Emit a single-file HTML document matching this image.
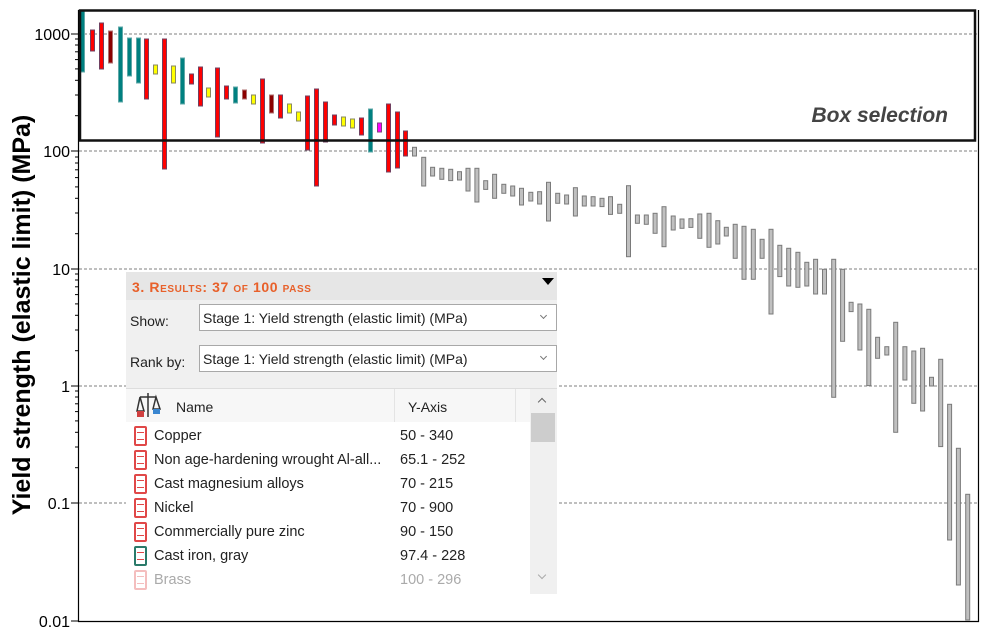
<!DOCTYPE html>
<html><head><meta charset="utf-8"><style>
body{margin:0;width:981px;height:630px;background:#fff;position:relative;overflow:hidden;font-family:"Liberation Sans",sans-serif}
#svg{position:absolute;left:0;top:0}
#svg text{font-family:"Liberation Sans",Arial,sans-serif}
.panel{position:absolute;left:126px;top:272px;width:431px;height:321px;background:#f0f0f0;font-family:"Liberation Sans",sans-serif;font-size:14px;color:#222}
.hdr{position:absolute;left:0;top:0;width:431px;height:28px;background:#e6e6e6}
.title{position:absolute;left:6px;top:8px;color:#e8602a;font-weight:bold;font-family:"Liberation Sans",sans-serif;letter-spacing:.6px;font-variant:small-caps;font-size:14px;line-height:14px}
.tri{position:absolute;right:3px;top:6px;width:0;height:0;border-left:6px solid transparent;border-right:6px solid transparent;border-top:7px solid #000}
.lbl{position:absolute;left:4px}
.dd{position:absolute;left:73px;width:358px;height:27px;border:1px solid #a8a8a8;background:#fff;box-sizing:border-box;padding:5px 0 0 3px;font-size:14px;white-space:nowrap}
.dd:after{content:"";position:absolute;right:10px;top:8px;width:4px;height:4px;border-right:1px solid #777;border-bottom:1px solid #777;transform:rotate(45deg)}
.list{position:absolute;left:0;top:116px;width:431px;height:205px;background:#fff;border-top:1px solid #ddd}
.lh{position:absolute;left:0;top:0;width:404px;height:33px;background:#f7f7f7}
.row{position:absolute;left:28px;font-size:14.5px;white-space:nowrap}
.val{position:absolute;left:274px;font-size:14.5px}
.ic{position:absolute;left:8px;width:9px;height:16px;border:2px solid #e04848;background:#fff;border-radius:2px;box-sizing:content-box}
.ic:after{content:"";position:absolute;left:1px;top:4px;width:7px;height:6px;border-top:1.5px solid currentColor;border-bottom:1.5px solid currentColor;color:#e04848}
.sb{position:absolute;left:404px;top:0;width:27px;height:205px;background:#f0f0f0}
</style></head><body>
<svg id="svg" width="981" height="630" xmlns="http://www.w3.org/2000/svg"></svg>
<div class="panel">
 <div class="hdr"><div class="title">3. Results: 37 of 100 pass</div><div class="tri"></div></div>
 <div class="lbl" style="top:41px">Show:</div>
 <div class="dd" style="top:32px">Stage 1: Yield strength (elastic limit) (MPa)</div>
 <div class="lbl" style="top:82px">Rank by:</div>
 <div class="dd" style="top:73px">Stage 1: Yield strength (elastic limit) (MPa)</div>
 <div class="list">
  <div class="lh">
   <svg style="position:absolute;left:10px;top:2px" width="26" height="28"><path d="M12 2v24M4 6h16M4 6l-3 14h7zM20 6l-3 12h7z" stroke="#333" fill="none" stroke-width="1.5"/><path d="M1 20h7v6H1z" fill="#d04040"/><path d="M17 18h7v5h-7z" fill="#3a86d0"/></svg>
   <div style="position:absolute;left:50px;top:10px">Name</div>
   <div style="position:absolute;left:268px;top:0;width:1px;height:33px;background:#e4e4e4"></div>
   <div style="position:absolute;left:282px;top:10px">Y-Axis</div>
   <div style="position:absolute;left:389px;top:0;width:1px;height:33px;background:#e4e4e4"></div>
  </div>
  <div class="sb"><div style="position:absolute;left:9px;top:10px;width:5px;height:5px;border-left:1.5px solid #666;border-top:1.5px solid #666;transform:rotate(45deg)"></div><div style="position:absolute;left:1px;top:24px;width:24px;height:29px;background:#cdcdcd"></div><div style="position:absolute;left:9px;top:183px;width:5px;height:5px;border-right:1.5px solid #aaa;border-bottom:1.5px solid #aaa;transform:rotate(45deg)"></div></div>
  <div class="ic" style="top:37px"></div><div class="row" style="top:39px">Copper</div><div class="val" style="top:39px">50 - 340</div>
  <div class="ic" style="top:61px"></div><div class="row" style="top:63px">Non age-hardening wrought Al-all...</div><div class="val" style="top:63px">65.1 - 252</div>
  <div class="ic" style="top:85px"></div><div class="row" style="top:87px">Cast magnesium alloys</div><div class="val" style="top:87px">70 - 215</div>
  <div class="ic" style="top:109px"></div><div class="row" style="top:111px">Nickel</div><div class="val" style="top:111px">70 - 900</div>
  <div class="ic" style="top:133px"></div><div class="row" style="top:135px">Commercially pure zinc</div><div class="val" style="top:135px">90 - 150</div>
  <div class="ic" style="top:157px;border-color:#2a7a6a;color:#2a7a6a"></div><div class="row" style="top:159px">Cast iron, gray</div><div class="val" style="top:159px">97.4 - 228</div>
  <div class="ic" style="top:181px;opacity:.35"></div><div class="row" style="top:183px;color:#aaa">Brass</div><div class="val" style="top:183px;color:#aaa">100 - 296</div>
 </div>
</div>
<script>
var s='';
var grid=[34,151,269,386,503,621],labs=['1000','100','10','1','0.1','0.01'];
for(var i=0;i<6;i++){var y=grid[i];
 if(i<5)s+='<line x1="79" y1="'+y+'" x2="978" y2="'+y+'" stroke="#555" stroke-width="0.8" stroke-dasharray="3,2"/>';
 s+='<line x1="71" y1="'+y+'" x2="79" y2="'+y+'" stroke="#000" stroke-width="1"/>';
 s+='<text x="70" y="'+(y+6)+'" text-anchor="end" font-size="16">'+labs[i]+'</text>';
 if(i<5)for(var k=2;k<10;k++){var yy=y-Math.log10(k)*117.4; if(yy>10)s+='<line x1="75" y1="'+yy.toFixed(1)+'" x2="79" y2="'+yy.toFixed(1)+'" stroke="#000"/>';}
}
s+='<line x1="78.5" y1="10" x2="78.5" y2="622" stroke="#000" stroke-width="1.2"/>';
s+='<line x1="78" y1="621.5" x2="979" y2="621.5" stroke="#000" stroke-width="1.2"/>';
s+='<line x1="978.5" y1="10" x2="978.5" y2="622" stroke="#000" stroke-width="1.2"/>';
var C={r:['#ff0000','#704060'],t:['#008080','#60a8a8'],y:['#ffff00','#8a8a60'],d:['#8b0000','#b07070'],m:['#ff00ff','#804080'],g:['#c0c0c0','#7a7a7a']};
var B=[[80,10,72,'t'],[90,30,51,'r'],[99,23,69,'r'],[108,31,63,'d'],[118,27,102,'t'],[127,38,76,'t'],[136,38,83,'t'],[144,39,99,'r'],[153,65,74,'y'],[162,39,169,'r'],[171,66,83,'y'],[180,58,104,'t'],[189,74,84,'r'],[198,67,106,'r'],[206,88,97,'y'],[215,68,137,'r'],[224,86,99,'r'],[233,87,103,'t'],[242,90,99,'d'],[251,95,104,'y'],[260,79,143,'r'],[269,95,113,'d'],[278,95,118,'r'],[287,104,113,'y'],[296,112,121,'y'],[305,96,150,'r'],[314,89,186,'r'],[323,102,142,'r'],[332,115,125,'r'],[341,117,126,'y'],[350,119,128,'y'],[359,118,135,'r'],[368,109,152,'t'],[377,123,132,'m'],[386,104,172,'r'],[395,112,168,'r'],[403,131,156,'r']];
var G=[[38,22,48],[63,52,138],[87,82,108],[112,85,118],[136,88,122],[160,95,120],[183,85,153],[207,85,186],[231,122,148],[255,103,175],[280,133,160],[304,138,168],[328,145,195],[353,157,183],[377,155,192],[401,127,243],[426,160,190],[450,165,192],[474,143,228],[498,168,198],[522,170,198],[546,175,200],[569,170,223],[594,193,220],[618,137,350],[642,225,250],[666,225,253],[690,220,280],[714,200,320],[739,228,270],[763,237,265],[787,236,262],[811,222,295],[836,220,322],[860,242,312],[883,262,288],[907,253,355],[931,259,418],[956,268,418],[980,298,355],[1004,268,522],[1028,316,410],[1052,325,438],[1077,337,442],[1101,367,438],[1125,358,462],[1149,388,462],[1174,358,772],[1198,388,604],[1221,487,515],[1245,492,630],[1269,508,737],[1293,592,655],[1318,620,645],[1342,547,877],[1367,620,720],[1391,633,790],[1415,625,813],[1439,712,738],[1464,658,920],[1488,793,1200],[1512,925,1335],[1537,1063,1440]];
var fx=2.71,fy=3;
G.forEach(function(g){B.push([400+g[0]/fx-2,140+g[1]/fy,Math.min(621,140+g[2]/fy),'g']);});
B.forEach(function(b){var c=C[b[3]];s+='<rect x="'+(b[0]+0.5).toFixed(1)+'" y="'+b[1].toFixed(1)+'" width="4" height="'+(b[2]-b[1]).toFixed(1)+'" fill="'+c[0]+'" stroke="'+c[1]+'" stroke-width="1"/>';});
s+='<rect x="80" y="10.5" width="895" height="130" fill="none" stroke="#111" stroke-width="2.5"/>';
s+='<text x="948" y="122" text-anchor="end" font-size="21" font-weight="bold" font-style="italic" fill="#444">Box selection</text>';
s+='<text transform="translate(30,315) rotate(-90)" text-anchor="middle" font-size="25" font-weight="bold">Yield strength (elastic limit) (MPa)</text>';
document.getElementById('svg').innerHTML=s;
</script>
</body></html>
